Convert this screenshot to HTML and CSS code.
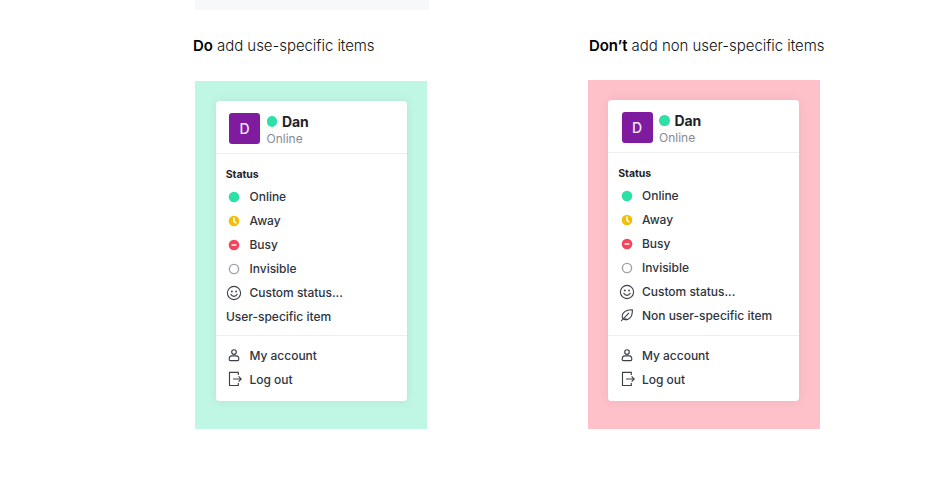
FILE: index.html
```html
<!DOCTYPE html>
<html lang="en">
<head>
<meta charset="utf-8">
<title>User menu guidelines</title>
<link rel="stylesheet" href="styles.css">
</head>
<body>
<svg class="sprite" aria-hidden="true">
  <symbol id="online" viewBox="0 0 16 16"><circle cx="8" cy="8" r="5.3" fill="#2de0a5"/></symbol>
  <symbol id="away" viewBox="0 0 16 16"><circle cx="8" cy="8" r="5.3" fill="#f3be08"/><path d="M8 4.6v3.7l2.2 1.9" fill="none" stroke="#fff" stroke-width="1.5"/></symbol>
  <symbol id="busy" viewBox="0 0 16 16"><circle cx="8" cy="8" r="5.3" fill="#f5455c"/><path d="M5.6 8h4.8" stroke="#fff" stroke-width="1.5"/></symbol>
  <symbol id="invisible" viewBox="0 0 16 16"><circle cx="8" cy="8" r="4.6" fill="none" stroke="#9ea2a8" stroke-width="1.4"/></symbol>
  <symbol id="smile" viewBox="0 0 16 16"><g fill="none" stroke="#3b4049" stroke-width="1.1" stroke-linecap="round"><circle cx="8" cy="8" r="6.6"/><path d="M4.8 9.3c.7 1.4 1.8 2.1 3.2 2.1s2.5-.7 3.2-2.1"/></g><circle cx="5.9" cy="6.5" r=".9" fill="#3b4049"/><circle cx="10.1" cy="6.5" r=".9" fill="#3b4049"/></symbol>
  <symbol id="leaf" viewBox="0 0 16 16"><path d="M2.5 13.7 9.8 6.2M4 12.1C1.6 7.2 5.2 2.6 13.4 2.7c.1 7.8-3.9 11.8-9.4 9.4ZM4 12.1h3.6" fill="none" stroke="#3b4049" stroke-width="1.1" stroke-linecap="round" stroke-linejoin="round"/></symbol>
  <symbol id="user" viewBox="0 0 16 16"><g fill="none" stroke="#3b4049" stroke-width="1.15"><circle cx="8" cy="5" r="2.3"/><path d="M5.7 8.9h4.6c1.5 0 2.5 1.4 2.5 3.4 0 .9-.4 1.3-1.2 1.3H4.4c-.8 0-1.2-.4-1.2-1.3 0-2 1-3.4 2.5-3.4Z"/></g></symbol>
  <symbol id="logout" viewBox="0 0 16 16"><path d="M12.3 4V1.3H3.5v13.2h8.8V12M7 8h8.2M12.6 5.3 15.3 8l-2.7 2.7" fill="none" stroke="#3b4049" stroke-width="1.15"/></symbol>
</svg>
<main class="page">
  <section class="example">
    <div class="previous"></div>
    <p class="caption"><strong>Do</strong> add use-specific items</p>
    <div class="panel panel-do">
      <div class="menu">
        <header class="profile">
          <div class="avatar">D</div>
          <div>
            <div class="name"><span class="dot"></span>Dan</div>
            <div class="state">Online</div>
          </div>
        </header>
        <div class="group">
          <h2 class="label">Status</h2>
          <ul class="items">
            <li><svg class="icon"><use href="#online"/></svg>Online</li>
            <li><svg class="icon"><use href="#away"/></svg>Away</li>
            <li><svg class="icon"><use href="#busy"/></svg>Busy</li>
            <li><svg class="icon"><use href="#invisible"/></svg>Invisible</li>
            <li><svg class="icon"><use href="#smile"/></svg>Custom status...</li>
            <li>User-specific item</li>
          </ul>
        </div>
        <ul class="items account">
          <li><svg class="icon"><use href="#user"/></svg>My account</li>
          <li><svg class="icon"><use href="#logout"/></svg>Log out</li>
        </ul>
      </div>
    </div>
  </section>
  <section class="example">
    <div class="previous previous-empty"></div>
    <p class="caption caption-dont"><strong>Don’t</strong> add non user-specific items</p>
    <div class="panel panel-dont">
      <div class="menu">
        <header class="profile">
          <div class="avatar">D</div>
          <div>
            <div class="name"><span class="dot"></span>Dan</div>
            <div class="state">Online</div>
          </div>
        </header>
        <div class="group">
          <h2 class="label">Status</h2>
          <ul class="items">
            <li><svg class="icon"><use href="#online"/></svg>Online</li>
            <li><svg class="icon"><use href="#away"/></svg>Away</li>
            <li><svg class="icon"><use href="#busy"/></svg>Busy</li>
            <li><svg class="icon"><use href="#invisible"/></svg>Invisible</li>
            <li><svg class="icon"><use href="#smile"/></svg>Custom status...</li>
            <li><svg class="icon"><use href="#leaf"/></svg>Non user-specific item</li>
          </ul>
        </div>
        <ul class="items account">
          <li><svg class="icon"><use href="#user"/></svg>My account</li>
          <li><svg class="icon"><use href="#logout"/></svg>Log out</li>
        </ul>
      </div>
    </div>
  </section>
</main>
</body>
</html>
```
FILE: styles.css
```css
* { box-sizing: border-box; }
body {
  margin: 0;
  background: #fff;
  font-family: Inter, "Liberation Sans", sans-serif;
  color: #2f343d;
}
.sprite { display: none; }
.page {
  display: grid;
  grid-template-columns: 234px 240px;
  column-gap: 159px;
  padding-left: 195px;
}
.previous { height: 10px; background: #f7f8fa; }
.previous-empty { background: none; }
.caption {
  height: 70px;
  margin: 0 0 0 -2px;
  padding-top: 26px;
  font-size: 15px;
  line-height: 20px;
  font-weight: 300;
  letter-spacing: -.05px;
  color: #111;
  white-space: nowrap;
}
.caption-dont { margin-left: 1px; }
.caption strong { font-weight: 600; color: #000; }
.panel { width: 232px; }
.panel-do { height: 348px; margin-top: 1px; padding: 20px 0 0 20.5px; background: #c0f6e4; }
.panel-dont { height: 349px; padding: 20px 0 0 20px; background: #fec1c9; }
.menu {
  width: 191px;
  height: 301px;
  background: #fff;
  border-radius: 3.5px;
  box-shadow: 0 0 10px rgba(47, 52, 61, .09);
}
.panel-do .menu { height: 300.4px; }
.profile {
  display: flex;
  gap: 6.5px;
  height: 53px;
  padding: 12px 0 0 13.5px;
  border-bottom: 1px solid #eeeff1;
}
.avatar {
  width: 31px;
  height: 31px;
  border-radius: 3px;
  background: #7f1b9f;
  color: #f3e8f5;
  font-size: 14px;
  line-height: 32px;
  font-weight: 500;
  text-align: center;
}
.name {
  display: flex;
  align-items: center;
  gap: 5px;
  height: 17px;
  font-size: 14px;
  font-weight: 700;
  letter-spacing: -.15px;
  color: #1f2329;
}
.dot { width: 10.5px; height: 10.5px; border-radius: 50%; background: #2de0a5; }
.state { font-size: 12px; line-height: 17px; color: #868b93; }
.group { height: 183px; padding-top: 13px; border-bottom: 1px solid #eeeff1; }
.panel-do .group { height: 182px; }
.label {
  height: 18px;
  margin: 0 0 0 10.3px;
  font-size: 10.5px;
  line-height: 16px;
  font-weight: 700;
  letter-spacing: -.05px;
  color: #1f2329;
}
.items { margin: 0; padding: 0 0 0 10.5px; list-style: none; }
.items li {
  display: flex;
  align-items: center;
  gap: 7.5px;
  height: 23.9px;
  font-size: 12px;
  font-weight: 500;
  letter-spacing: -.02px;
  white-space: nowrap;
}
.icon { width: 16px; height: 16px; flex: none; }
.account { padding-top: 7.5px; }
```
